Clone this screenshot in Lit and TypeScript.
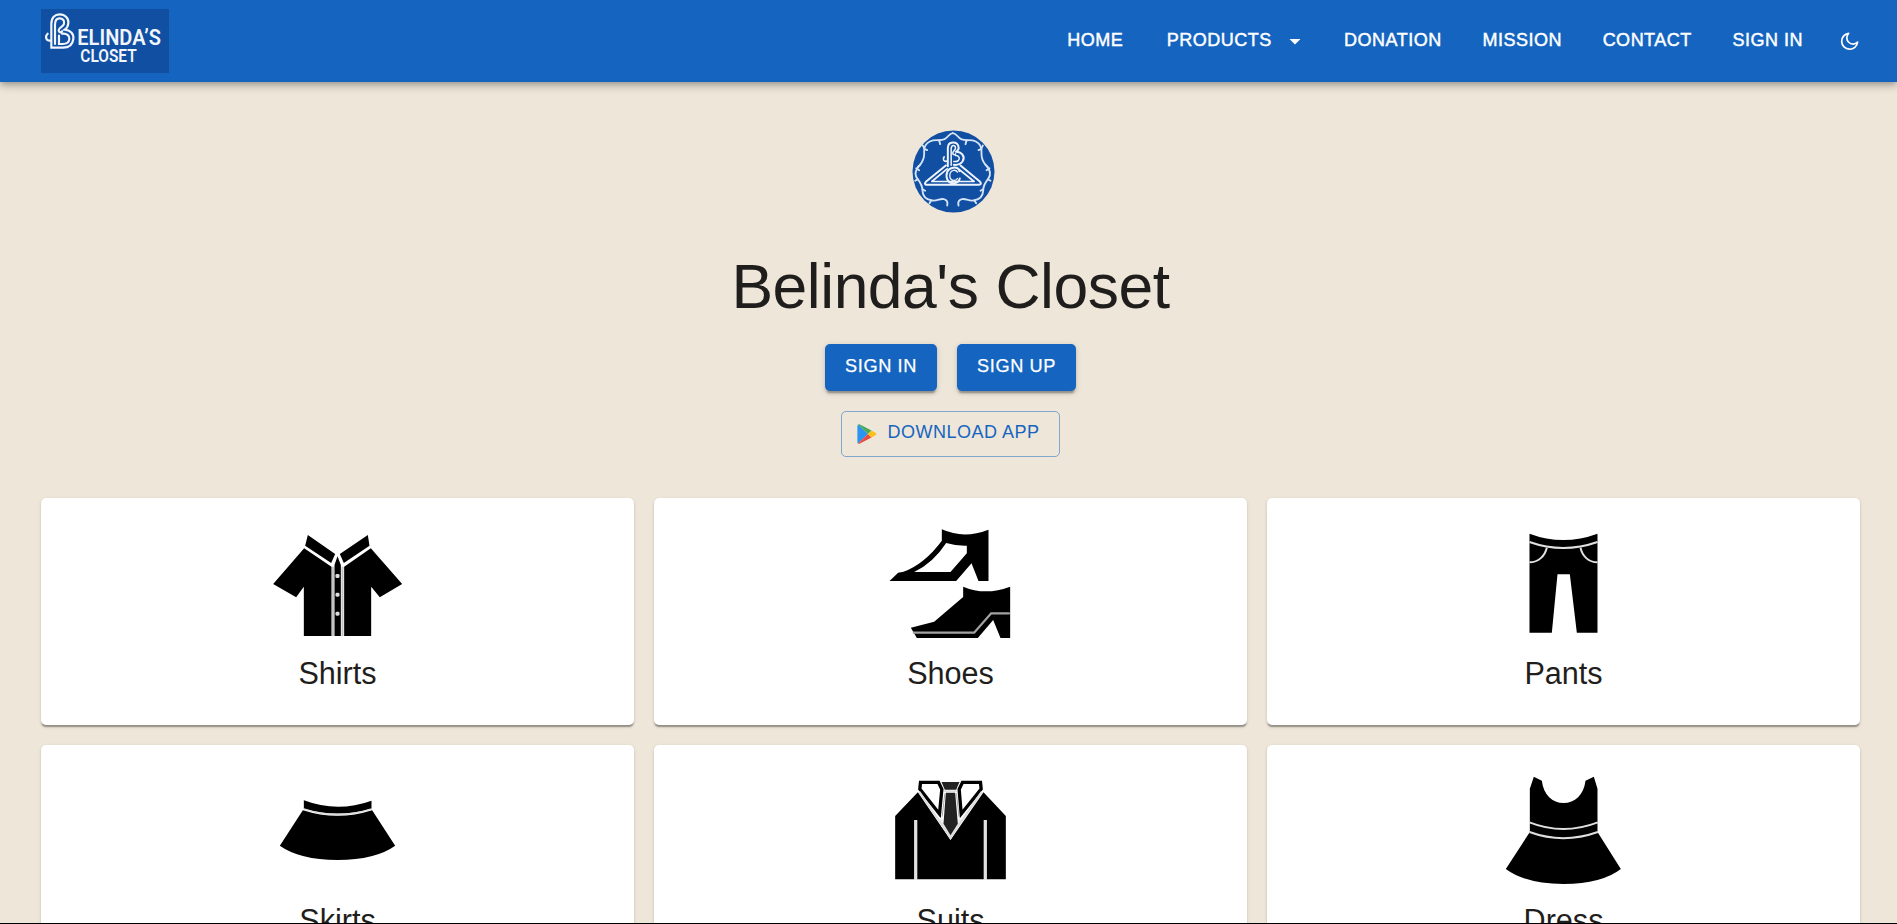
import { LitElement, html, svg, css } from "lit";
import { customElement, property } from "lit/decorators.js";

const artwork: Record<string, { viewBox: string; body: unknown }> = {
  Shirts: {
    viewBox: "92.5 114 400 360",
    body: svg`
      <path d="M203 165 L285 222 L273 249 L195 197 Z M383 165 L299 222 L311 249 L388 197 Z"/>
      <path d="M192 205 L274 260 V468 H191 V320 L168 352 L99 312 Z"/>
      <path d="M392 205 L312 260 V468 H393 V320 L419 352 L486 312 Z"/>
      <path d="M292 229 L302 255 V468 H283 V255 Z"/>
      <path d="M278.500 260 V468 M307 260 V468" stroke="#c4c4c4" stroke-width="6"/>
      <g fill="#ddd"><rect x="286" y="282" width="12" height="12" rx="4"/><rect x="286" y="338" width="12" height="12" rx="4"/><rect x="286" y="395" width="12" height="12" rx="4"/></g>`,
  },
  Shoes: {
    viewBox: "71.5 54 400 360",
    body: svg`
      <path fill-rule="evenodd" d="M245 88 Q311 118 385 89 V243 H355 L334 190 L288 243 H88 L114 218 L130 215 Q192 193 245 122 Z M258 129 Q220 188 162 216 H271 L320 160 V137 Q288 138 258 129 Z"/>
      <path d="M309 260 Q375 288 450 260 V414 H421 L399 360 L353 414 H170 L152 383 L222 365 L309 291 Z"/>
      <path d="M158 398 H342 L393 340 H449" fill="none" stroke="#a2a2a2" stroke-width="7"/>`,
  },
  Pants: {
    viewBox: "50.5 54 400 360",
    body: svg`
      <path d="M148 101 Q249 139 352 101 V398 H290 L269 223 H232 L215 398 H148 Z"/>
      <g fill="none" stroke="#e2e2e2" stroke-width="6"><path d="M148 126 Q249 162 352 126"/><path d="M200 143 C194 168 175 187 148 187 M301 143 C306 168 325 187 352 187"/></g>`,
  },
  Skirts: {
    viewBox: "92.5 75 400 360",
    body: svg`
      <path d="M191 181 Q292 219 394 182 V206 Q292 235 191 206 Z"/>
      <path d="M188 211 Q292 244 396 211 L465 317 Q407 359 292 360 Q178 359 119 317 Z"/>
      <path d="M191 207 Q292 240 394 207" fill="none" stroke="#ddd" stroke-width="4"/>`,
  },
  Suits: {
    viewBox: "71.5 75 400 360",
    body: svg`
      <path d="M173 157 L271 300 L370 157 L437 228 V418 H379 V240 L371 241 V418 H171 V241 L163 240 V418 H105 V228 Z"/>
      <path d="M162 240 H171 V419 H162 Z M371 240 H380 V419 H371 Z" fill="#e2e2e2"/>
      <path d="M181 127 H235 L245 148 L238 222 L179 147 Z M361 127 H307 L297 148 L303 222 L363 147 Z" fill="#fff" stroke="#000" stroke-width="10"/>
      <path d="M244 126 H298 L288 149 H254 Z" fill="#222"/>
      <path d="M242 232 L271 286 L299 232 L303 244 L271 300 L236 244 Z" fill="#eee"/>
      <path d="M177 155 L271 292 L365 155" fill="none" stroke="#ddd" stroke-width="6"/>
      <path d="M257 158 H285 L293 251 L271 286 L250 251 Z" fill="#222"/>
      <path d="M252 153.500 H290" stroke="#ddd" stroke-width="5"/>
      <path d="M254 160 L246 230 M289 160 L296 230" stroke="#aaa" stroke-width="3"/>`,
  },
  Dress: {
    viewBox: "50.5 75 400 360",
    body: svg`
      <path d="M161 110 L185 122 C190 164 217 189 250 189 C284 189 311 164 316 122 L341 110 L352 146 V276 L422 387 Q366 431 250 432 Q136 431 77 387 L149 276 V146 Z"/>
      <g fill="none" stroke="#e0e0e0" stroke-width="6"><path d="M148 247 Q249 287 353 247 M148 276 Q249 313 353 276"/></g>`,
  },
};

@customElement("category-card")
class CategoryCard extends LitElement {
  @property() label = "";

  static styles = css`
    :host {
      display: flex;
      flex-direction: column;
      align-items: center;
      box-sizing: border-box;
      height: 227px;
      padding-top: 20px;
      border-radius: 5px;
      background: #fff;
      box-shadow: 0 2.5px 1.25px -1.25px rgba(0, 0, 0, 0.2), 0 1.25px 1.25px rgba(0, 0, 0, 0.14), 0 1.25px 3.75px rgba(0, 0, 0, 0.12);
    }
    .art { display: block; width: 133.33px; height: 120px; flex: none; }
    .label { margin-top: 15px; font-size: 30.6px; line-height: 40px; }
  `;

  render() {
    const art = artwork[this.label];
    return html`
      <svg class="art" viewBox=${art.viewBox}>${art.body}</svg>
      <div class="label">${this.label}</div>
    `;
  }
}

@customElement("app-root")
class AppRoot extends LitElement {
  static styles = css`
    :host {
      display: flex;
      flex-direction: column;
      box-sizing: border-box;
      height: 924px;
      overflow: hidden;
      border-bottom: 1px solid #000;
      background: #eee6d9;
      color: #1f1e1c;
      font-family: "Liberation Sans", Arial, sans-serif;
    }
    .bar {
      display: flex;
      align-items: center;
      flex: none;
      box-sizing: border-box;
      height: 82px;
      padding: 0 35px 0 41px;
      background: #1565c0;
      color: #fff;
      box-shadow: 0 2.5px 5px -1.25px rgba(0, 0, 0, 0.2), 0 5px 6.25px rgba(0, 0, 0, 0.14), 0 1.25px 12.5px rgba(0, 0, 0, 0.12);
      z-index: 1;
    }
    .brand { display: block; width: 128px; height: 64px; margin-right: auto; }
    .nav {
      display: flex;
      align-items: center;
      gap: 40.7px;
      padding-bottom: 2px;
      font-size: 18px;
      line-height: 30px;
      letter-spacing: 0.5px;
      -webkit-text-stroke: 0.45px #fff;
    }
    .home { margin-right: 3px; }
    .menu { display: flex; align-items: center; gap: 17.5px; }
    .caret { display: block; width: 12px; height: 6px; margin: 4px 2px 0 0; }
    .moon { display: block; width: 25px; height: 25px; margin: 1px 0 0 34px; }
    .hero { display: flex; flex-direction: column; align-items: center; flex: none; padding-left: 4px; }
    .seal { display: block; width: 83px; height: 83px; margin: 47.5px 0 0 6px; }
    .title {
      margin: 38px 0 0;
      font-size: 62.4px;
      line-height: 72px;
      font-weight: 400;
      letter-spacing: -0.45px;
    }
    .actions { display: flex; gap: 20px; margin-top: 21.5px; }
    .button {
      display: flex;
      align-items: center;
      justify-content: center;
      box-sizing: border-box;
      height: 47px;
      padding-bottom: 3px;
      border-radius: 5px;
      background: #1565c0;
      color: #fff;
      font-size: 18.2px;
      letter-spacing: 0.6px;
      white-space: nowrap;
      -webkit-text-stroke: 0.25px #fff;
      box-shadow: 0 3.75px 1.25px -2.5px rgba(0, 0, 0, 0.2), 0 2.5px 2.5px rgba(0, 0, 0, 0.14), 0 1.25px 6.25px rgba(0, 0, 0, 0.12);
    }
    .signin { width: 112px; }
    .signup { width: 119px; }
    .download {
      display: flex;
      align-items: center;
      box-sizing: border-box;
      width: 219px;
      height: 46px;
      margin-top: 20px;
      padding-left: 15px;
      border: 1px solid rgba(21, 101, 192, 0.5);
      border-radius: 5px;
      color: #1565c0;
      font-size: 18px;
      letter-spacing: 0.5px;
    }
    .play { display: block; width: 20px; height: 20px; margin-right: 10.500px; }
    .download-text { padding-bottom: 3px; white-space: nowrap; }
    .grid {
      display: grid;
      grid-template-columns: repeat(3, 1fr);
      gap: 20px;
      flex: none;
      margin: 41px 37px 0 41px;
    }
  `;

  private brand() {
    return html`<svg class="brand" viewBox="63 27 384 192">
      <rect x="63" y="27" width="384" height="192" fill="#114fa2" />
      <g fill="none" stroke="#f1f5fc" stroke-width="6.500" stroke-linecap="round">
        <path d="M94 143 V72 C94 52 105 43 119 43 C135 43 147 55 145 70 C144 79 140 85 134 89 C151 90 162 101 160 117 C158 134 146 143 129 143 Z" />
        <path d="M105 132 V74 C105 61 111 55 119 55 C129 55 134 63 132 71 C130 81 116 82 116 91 C116 97 123 99 126 94" />
        <path d="M126 101 C141 99 149 107 148 117 C147 128 139 132 128 132 H117 V107" />
        <path d="M91 122 C78 123 74 110 83 101" />
      </g>
      <g fill="#f1f5fc" font-family="Roboto, sans-serif" font-weight="600">
        <text x="172" y="135" font-size="68" textLength="251" lengthAdjust="spacingAndGlyphs">ELINDA’S</text>
        <text x="181" y="185" font-size="54" textLength="169" lengthAdjust="spacingAndGlyphs">CLOSET</text>
      </g>
    </svg>`;
  }

  private seal() {
    const vine = svg`
      <path d="M189 67 C177 68 176 79 164 85 C149 92 137 84 120 92 C105 99 102 111 103 126 C104 143 100 151 90 163 C78 176 73 192 83 204 C93 216 98 224 98 240 C99 257 111 267 127 269 C143 271 151 262 162 265 C171 267 174 275 172 284"/>
      <path d="M148 88 L151 100 M103 114 L112 118 M103 112 L99 104 M91 162 L84 168 M88 178 L79 172 M84 205 L76 210 M98 235 L106 240 M124 269 L119 277"/>`;
    return html`<svg class="seal" viewBox="66.500 57.500 249 249">
      <circle cx="191" cy="182" r="123" fill="#114fa2" />
      <g fill="none" stroke="#d6e4f7" stroke-width="5.500" stroke-linecap="round" stroke-linejoin="round">
        ${vine}
        <g transform="translate(378 0) scale(-1 1)">${vine}</g>
      </g>
      <g fill="none" stroke="#eef4fd" stroke-linecap="round" stroke-linejoin="round">
        <path d="M168 164 L108 213 C103 218 105 222 111 222 H267 C274 222 275 217 270 212 L212 164" stroke-width="6" />
        <path d="M172 174 L126 212 H253 L208 176" stroke-width="5" />
        <path d="M174 166 V112 C174 90 202 91 206 107 C208 114 203 120 198 123 C218 124 227 139 218 152 C212 160 202 163 192 162" stroke-width="6" />
        <path d="M184 163 V114 C184 102 196 101 197 110 C198 118 190 119 189 126 C188 132 194 133 197 129 M192 152 C204 154 210 147 208 140 C206 135 202 133 197 134" stroke-width="4.500" />
        <path d="M171 151 C162 153 157 145 163 138" stroke-width="5" />
        <path d="M209 181 C204 165 178 168 172 184 C166 201 174 216 190 217 C202 218 208 210 210 203" stroke-width="6" />
        <path d="M203 184 C198 175 184 177 181 187 C177 200 183 208 191 209 C197 209 201 207 203 203" stroke-width="4" />
      </g>
    </svg>`;
  }

  render() {
    return html`
      <header class="bar">
        ${this.brand()}
        <nav class="nav">
          <span class="home">HOME</span>
          <span class="menu">PRODUCTS
            <svg class="caret" viewBox="0 0 12 6"><path d="M0.500 0 H11.500 L6 5.500 Z" fill="#fff" /></svg>
          </span>
          <span>DONATION</span>
          <span>MISSION</span>
          <span>CONTACT</span>
          <span>SIGN IN</span>
        </nav>
        <svg class="moon" viewBox="0 0 25 25">
          <path d="M11.600 4.300 A8 8 0 1 0 20.600 13.200 A6.200 6.200 0 0 1 11.600 4.300 Z" fill="none" stroke="#fff" stroke-width="1.700" stroke-linejoin="round" />
        </svg>
      </header>
      <section class="hero">
        ${this.seal()}
        <h1 class="title">Belinda's Closet</h1>
        <div class="actions">
          <div class="button signin">SIGN IN</div>
          <div class="button signup">SIGN UP</div>
        </div>
        <div class="download">
          <svg class="play" viewBox="0 0 20 20">
            <path d="M1 0.500 L11 10 L1 19.500 Q0.400 19 0.400 18 V2 Q0.400 1 1 0.500 Z" fill="#2a94f0" />
            <path d="M1 0.500 Q2 0 3 0.500 L14.500 6.600 L11 10 Z" fill="#48a85f" />
            <path d="M1 19.500 Q2 20 3 19.500 L14.500 13.400 L11 10 Z" fill="#ea4a40" />
            <path d="M14.500 6.600 L18.800 9 Q20 10 18.800 11 L14.500 13.400 L11 10 Z" fill="#fbc116" />
          </svg>
          <span class="download-text">DOWNLOAD APP</span>
        </div>
      </section>
      <main class="grid">
        ${Object.keys(artwork).map((label) => html`<category-card label=${label}></category-card>`)}
      </main>
    `;
  }
}
